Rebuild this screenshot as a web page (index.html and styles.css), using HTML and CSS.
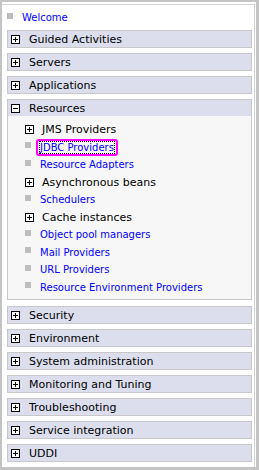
FILE: index.html
```html
<!DOCTYPE html>
<html lang="en">
<head>
    <meta charset="UTF-8">
    <title>Console Navigation</title>
    <link rel="stylesheet" href="styles.css">
</head>
<body>
    <div class="frame">
        <div class="inner">
            <div class="welcome">
                <span class="bullet"></span>
                <a href="#">Welcome</a>
            </div>

            <div class="section">
                <div class="head"><svg class="tog" viewBox="0 0 9 9"><rect x="0.5" y="0.5" width="8" height="8" fill="#fff" stroke="#000"/><path d="M2 4.5h5M4.5 2v5" stroke="#000"/></svg>Guided Activities</div>
            </div>
            <div class="section">
                <div class="head"><svg class="tog" viewBox="0 0 9 9"><rect x="0.5" y="0.5" width="8" height="8" fill="#fff" stroke="#000"/><path d="M2 4.5h5M4.5 2v5" stroke="#000"/></svg>Servers</div>
            </div>
            <div class="section">
                <div class="head"><svg class="tog" viewBox="0 0 9 9"><rect x="0.5" y="0.5" width="8" height="8" fill="#fff" stroke="#000"/><path d="M2 4.5h5M4.5 2v5" stroke="#000"/></svg>Applications</div>
            </div>

            <!-- expanded section -->
            <div class="section open">
                <div class="head"><svg class="tog" viewBox="0 0 9 9"><rect x="0.5" y="0.5" width="8" height="8" fill="#fff" stroke="#000"/><path d="M2 4.5h5" stroke="#000"/></svg>Resources</div>
                <ul class="items">
                    <li class="group"><svg class="tog" viewBox="0 0 9 9"><rect x="0.5" y="0.5" width="8" height="8" fill="#fff" stroke="#000"/><path d="M2 4.5h5M4.5 2v5" stroke="#000"/></svg>JMS Providers</li>
                    <li><span class="bullet"></span><a href="#" class="focus">JDBC Providers</a></li>
                    <li><span class="bullet"></span><a href="#">Resource Adapters</a></li>
                    <li class="group"><svg class="tog" viewBox="0 0 9 9"><rect x="0.5" y="0.5" width="8" height="8" fill="#fff" stroke="#000"/><path d="M2 4.5h5M4.5 2v5" stroke="#000"/></svg>Asynchronous beans</li>
                    <li><span class="bullet"></span><a href="#">Schedulers</a></li>
                    <li class="group"><svg class="tog" viewBox="0 0 9 9"><rect x="0.5" y="0.5" width="8" height="8" fill="#fff" stroke="#000"/><path d="M2 4.5h5M4.5 2v5" stroke="#000"/></svg>Cache instances</li>
                    <li><span class="bullet"></span><a href="#">Object pool managers</a></li>
                    <li><span class="bullet"></span><a href="#">Mail Providers</a></li>
                    <li><span class="bullet"></span><a href="#">URL Providers</a></li>
                    <li><span class="bullet"></span><a href="#">Resource Environment Providers</a></li>
                </ul>
            </div>

            <div class="section">
                <div class="head"><svg class="tog" viewBox="0 0 9 9"><rect x="0.5" y="0.5" width="8" height="8" fill="#fff" stroke="#000"/><path d="M2 4.5h5M4.5 2v5" stroke="#000"/></svg>Security</div>
            </div>
            <div class="section">
                <div class="head"><svg class="tog" viewBox="0 0 9 9"><rect x="0.5" y="0.5" width="8" height="8" fill="#fff" stroke="#000"/><path d="M2 4.5h5M4.5 2v5" stroke="#000"/></svg>Environment</div>
            </div>
            <div class="section">
                <div class="head"><svg class="tog" viewBox="0 0 9 9"><rect x="0.5" y="0.5" width="8" height="8" fill="#fff" stroke="#000"/><path d="M2 4.5h5M4.5 2v5" stroke="#000"/></svg>System administration</div>
            </div>
            <div class="section">
                <div class="head"><svg class="tog" viewBox="0 0 9 9"><rect x="0.5" y="0.5" width="8" height="8" fill="#fff" stroke="#000"/><path d="M2 4.5h5M4.5 2v5" stroke="#000"/></svg>Monitoring and Tuning</div>
            </div>
            <div class="section">
                <div class="head"><svg class="tog" viewBox="0 0 9 9"><rect x="0.5" y="0.5" width="8" height="8" fill="#fff" stroke="#000"/><path d="M2 4.5h5M4.5 2v5" stroke="#000"/></svg>Troubleshooting</div>
            </div>
            <div class="section">
                <div class="head"><svg class="tog" viewBox="0 0 9 9"><rect x="0.5" y="0.5" width="8" height="8" fill="#fff" stroke="#000"/><path d="M2 4.5h5M4.5 2v5" stroke="#000"/></svg>Service integration</div>
            </div>
            <div class="section">
                <div class="head"><svg class="tog" viewBox="0 0 9 9"><rect x="0.5" y="0.5" width="8" height="8" fill="#fff" stroke="#000"/><path d="M2 4.5h5M4.5 2v5" stroke="#000"/></svg>UDDI</div>
            </div>
        </div>
    </div>
</body>
</html>
```

FILE: styles.css
```css
/* Navigation tree of the admin console */
body {
    margin: 0;
    font-family: "DejaVu Sans", Verdana, sans-serif;
    font-size: 11px;
    color: #000;
    background-color: #fff;
}
.frame {
    width: 259px;
    height: 470px;
    box-sizing: border-box;
    border-style: solid;
    border-color: #c4c4c4;
    border-width: 2px 3px 3px 2px;
    padding: 2px 1px 0 0;
}
.inner {
    height: 100%;
    box-sizing: border-box;
    border-top: 1px solid #d2d2d2;
    border-right: 1px solid #d2d2d2;
    padding: 0 2px 0 5px;
}
a {
    color: #0000ff;
    font-size: 10px;
    text-decoration: none;
}
.bullet {
    display: inline-block;
    width: 6px;
    height: 6px;
    background-color: #bdbdbd;
    flex: none;
}
.welcome {
    display: flex;
    align-items: center;
    height: 13px;
    margin: 6px 0 6px;
}
.welcome .bullet {
    margin-right: 9px;
    position: relative;
    top: -2px;
}
.section {
    border: 1px solid #c8c8c8;
    margin-bottom: 5px;
}
.head {
    display: flex;
    align-items: center;
    height: 16px;
    padding-left: 3px;
    background-color: #dcdeee; /* lavender header */
}
.tog {
    width: 9px;
    height: 9px;
    margin-right: 9px;
    flex: none;
}
.open {
    margin-bottom: 6px;
}
.items {
    list-style: none;
    margin: 0;
    padding: 5px 0 3px 17px;
    background-color: #f7f7f7;
}
.items li {
    display: flex;
    align-items: center;
    height: 17.5px;
}
.items li .tog {
    margin-right: 8px;
}
.items li .bullet {
    margin-right: 9px;
    position: relative;
    top: -2px;
}
.focus {
    position: relative;
    outline: 1px dotted #000;
}
.focus::after {
    content: "";
    position: absolute;
    left: -4px;
    right: -4px;
    top: -3px;
    bottom: -3px;
    border: 2px solid #ff00ff;
    border-radius: 3px;
}
```
